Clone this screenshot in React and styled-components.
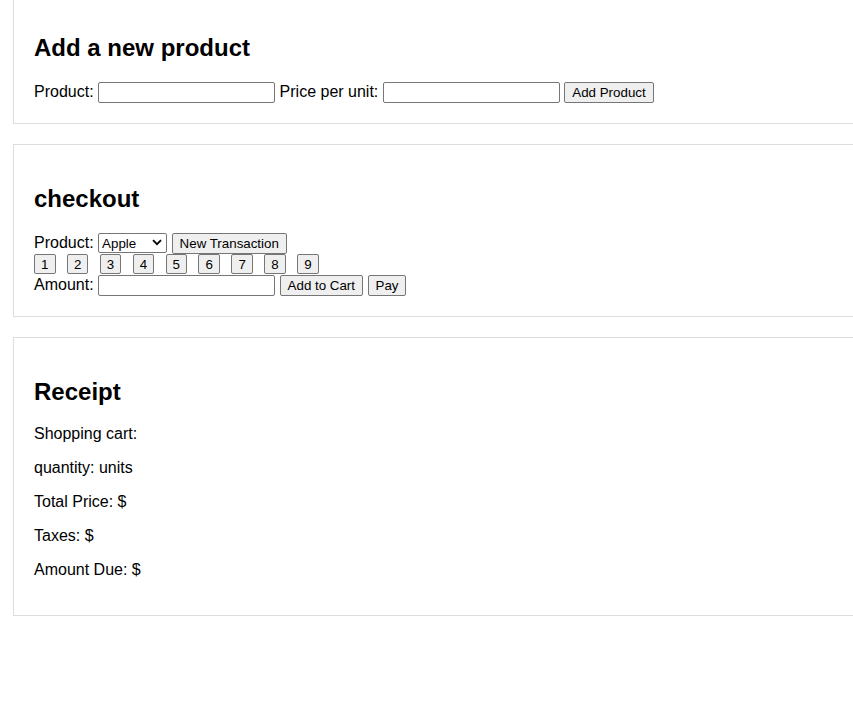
import React from "react";
import styled, { createGlobalStyle } from "styled-components";

const Global = createGlobalStyle`
  html, body { margin: 0; padding: 0; background: #fff; overflow: hidden; }
  body { font-family: "Liberation Sans", Arial, sans-serif; font-size: 16px; color: #000; }
`;

const Page = styled.div`
  padding-left: 13px;
  margin-top: -7px;
`;

const Card = styled.section`
  border: 1px solid #dddddd;
  border-right: none;
  padding: 20px;
  margin-bottom: 20px;
`;

const Title = styled.h2`
  font-size: 24px;
  font-weight: bold;
  margin: 19.92px 0;
  line-height: normal;
`;

const Row = styled.div`
  display: flex;
  align-items: center;
  height: 21px;
  gap: ${(p) => p.$gap || "4.5px"};
  white-space: nowrap;
`;

const Label = styled.span`
  font-size: 16px;
  line-height: 18px;
`;

const TextInput = styled.input`
  box-sizing: border-box;
  width: 177px;
  height: 21px;
  border: 1px solid #767676;
  border-radius: 2px;
  padding: 1px 2px;
  font-family: "Liberation Sans", Arial, sans-serif;
  font-size: 13.33px;
  background: #fff;
  margin: 0;
`;

const Button = styled.button`
  box-sizing: border-box;
  height: 21px;
  padding: 1px 7px;
  border: 1px solid #767676;
  border-radius: 2px;
  background: #efefef;
  color: #000;
  font-family: "Liberation Sans", Arial, sans-serif;
  font-size: 13.33px;
  line-height: 15px;
  margin: 0;
  cursor: default;
`;

const DigitButton = styled(Button)`
  height: 20px;
  width: 21.5px;
  padding: 1px 0;
`;

const SelectWrap = styled.span`
  position: relative;
  display: inline-flex;
`;

const Select = styled.select`
  box-sizing: border-box;
  width: 69px;
  height: 20px;
  border: 1px solid #767676;
  border-radius: 2px;
  background: #fff;
  color: #000;
  font-family: "Liberation Sans", Arial, sans-serif;
  font-size: 13.33px;
  padding: 0 0 0 3px;
  margin: 0;
  appearance: none;
  -webkit-appearance: none;
`;

const Chevron = styled.svg`
  position: absolute;
  right: 5px;
  top: 6px;
  width: 10px;
  height: 7px;
  pointer-events: none;
`;

const Line = styled.p`
  margin: 16px 0;
  font-size: 16px;
  line-height: 18px;
`;

export default function App() {
  const digits = [1, 2, 3, 4, 5, 6, 7, 8, 9];
  return (
    <>
      <Global />
      <Page>
        <Card>
          <Title>Add a new product</Title>
          <Row>
            <Label>Product:</Label>
            <TextInput type="text" />
            <Label>Price per unit:</Label>
            <TextInput type="text" />
            <Button>Add Product</Button>
          </Row>
        </Card>

        <Card>
          <Title>checkout</Title>
          <Row>
            <Label>Product:</Label>
            <SelectWrap>
              <Select defaultValue="Apple">
                <option>Apple</option>
                <option>Banana</option>
                <option>Orange</option>
              </Select>
              <Chevron viewBox="0 0 10 7">
                <path d="M1 1.2 L5 5.2 L9 1.2" fill="none" stroke="#000" strokeWidth="1.8" />
              </Chevron>
            </SelectWrap>
            <Button>New Transaction</Button>
          </Row>
          <Row $gap="11.4px">
            {digits.map((d) => (
              <DigitButton key={d}>{d}</DigitButton>
            ))}
          </Row>
          <Row>
            <Label>Amount:</Label>
            <TextInput type="text" />
            <Button>Add to Cart</Button>
            <Button>Pay</Button>
          </Row>
        </Card>

        <Card>
          <Title>Receipt</Title>
          <Line>Shopping cart:</Line>
          <Line>quantity: units</Line>
          <Line>Total Price: $</Line>
          <Line>Taxes: $</Line>
          <Line>Amount Due: $</Line>
        </Card>
      </Page>
    </>
  );
}
